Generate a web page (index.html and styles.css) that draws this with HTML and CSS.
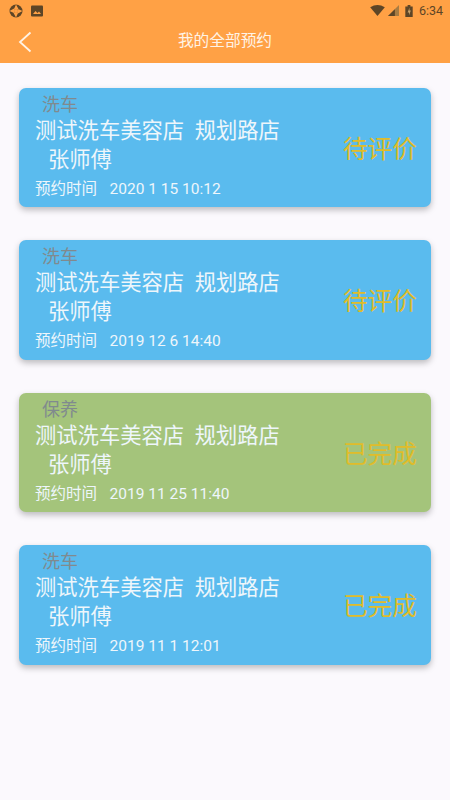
FILE: index.html
```html
<!DOCTYPE html>
<html lang="zh">
<head>
<meta charset="utf-8">
<title>我的全部预约</title>
<link rel="stylesheet" href="styles.css">
</head>
<body>
<header class="header">
  <div class="status">
    <svg class="st-app" viewBox="0 0 14 14"><circle cx="7" cy="7" r="6.500" fill="#5d4526"/><path d="M7 0.500L10 6 5 5zM13.500 7L8 10 9 5zM7 13.500L4 8 9 9zM0.500 7L6 4 5 9z" fill="#ffa145"/><circle cx="7" cy="7" r="2" fill="#ffa145"/></svg>
    <svg class="st-img" viewBox="0 0 12 12"><rect width="12" height="11" y="0.500" rx="1" fill="#5d4526"/><path d="M2 9l2.500-3 2 2 1.500-1.500L10 9z" fill="#ffa145"/></svg>
    <span class="st-gap"></span>
    <svg class="st-wifi" viewBox="0 0 16 12"><path d="M0 2.500Q8-2.500 16 2.500L8 12z" fill="#5d4526"/></svg>
    <svg class="st-signal" viewBox="0 0 12 12"><path d="M12 0V12H0z" fill="#a87c42"/><path d="M7.500 4.500V12H0z" fill="#5d4526"/></svg>
    <svg class="st-batt" viewBox="0 0 8 13"><path d="M2.500 0h3v1.500H8V13H0V1.500h2.500z" fill="#5d4526"/><path d="M4.500 3L2.500 8h1.500v3l2-5H4.500z" fill="#c9a36c"/></svg>
    <span class="st-time">6:34</span>
  </div>
  <div class="nav">
    <svg class="back" viewBox="0 0 14 22"><path d="M12.500 1.500L2 11l10.500 9.500" fill="none" stroke="#fff3e6" stroke-width="1.800"/></svg>
    <h1 class="title">我的全部预约</h1>
  </div>
</header>
<main class="list">
  <article class="card blue">
    <div class="info">
      <div class="kind">洗车</div>
      <div class="shop">测试洗车美容店&nbsp;&nbsp;规划路店</div>
      <div class="tech">张师傅</div>
      <div class="when"><span class="when-label">预约时间</span><span>2020 1 15 10:12</span></div>
    </div>
    <div class="state">待评价</div>
  </article>
  <article class="card blue">
    <div class="info">
      <div class="kind">洗车</div>
      <div class="shop">测试洗车美容店&nbsp;&nbsp;规划路店</div>
      <div class="tech">张师傅</div>
      <div class="when"><span class="when-label">预约时间</span><span>2019 12 6 14:40</span></div>
    </div>
    <div class="state">待评价</div>
  </article>
  <article class="card green">
    <div class="info">
      <div class="kind">保养</div>
      <div class="shop">测试洗车美容店&nbsp;&nbsp;规划路店</div>
      <div class="tech">张师傅</div>
      <div class="when"><span class="when-label">预约时间</span><span>2019 11 25 11:40</span></div>
    </div>
    <div class="state">已完成</div>
  </article>
  <article class="card blue">
    <div class="info">
      <div class="kind">洗车</div>
      <div class="shop">测试洗车美容店&nbsp;&nbsp;规划路店</div>
      <div class="tech">张师傅</div>
      <div class="when"><span class="when-label">预约时间</span><span>2019 11 1 12:01</span></div>
    </div>
    <div class="state">已完成</div>
  </article>
</main>
</body>
</html>
```
FILE: styles.css
```css
* { box-sizing: border-box; }
html, body { margin: 0; padding: 0; }
body {
  width: 450px;
  height: 800px;
  overflow: hidden;
  background: #fbf9fd;
  font-family: Roboto, "Noto Sans CJK SC", sans-serif;
}
.header { background: #ffa145; height: 63px; }
.status {
  height: 21px;
  padding: 0 6px 0 9px;
  display: flex;
  align-items: center;
}
.st-app { width: 14px; height: 14px; }
.st-img { width: 12px; height: 12px; margin-left: 8px; }
.st-gap { flex: 1; }
.st-wifi { width: 15px; height: 11px; }
.st-signal { width: 11px; height: 11px; margin-left: 3px; }
.st-batt { width: 8px; height: 12px; margin-left: 6px; }
.st-time { color: #5d4526; font-size: 12.500px; margin-left: 6px; width: 25px; }
.nav { height: 42px; display: flex; align-items: center; position: relative; }
.back { width: 14px; height: 22px; margin-left: 18px; }
.title {
  position: absolute;
  left: 0;
  right: 0;
  top: 8px;
  margin: 0;
  text-align: center;
  font-size: 15.700px;
  line-height: 24px;
  font-weight: 400;
  color: #fff3e6;
}
.list {
  padding: 25px 19px 0;
  display: flex;
  flex-direction: column;
  gap: 33px;
}
.card {
  height: 119.400px;
  border-radius: 7px;
  display: flex;
  justify-content: space-between;
  padding: 5px 14px 0 16px;
  box-shadow: 0 3px 6px rgba(0, 0, 0, 0.25);
}
.blue { background: #5abbee; }
.green { background: #a4c47b; }
.info { display: flex; flex-direction: column; }
.kind { color: #808a8e; font-size: 18px; line-height: 24px; padding-left: 7px; }
.shop { color: #eef6fb; font-size: 21.300px; line-height: 28px; }
.tech { color: #eef6fb; font-size: 21.300px; line-height: 29px; padding-left: 13px; }
.when { color: #eef6fb; font-size: 15.500px; line-height: 30px; display: flex; gap: 12.500px; }
.state { color: #e0bc2a; font-size: 24.700px; line-height: 30px; margin-top: 42px; }
```
